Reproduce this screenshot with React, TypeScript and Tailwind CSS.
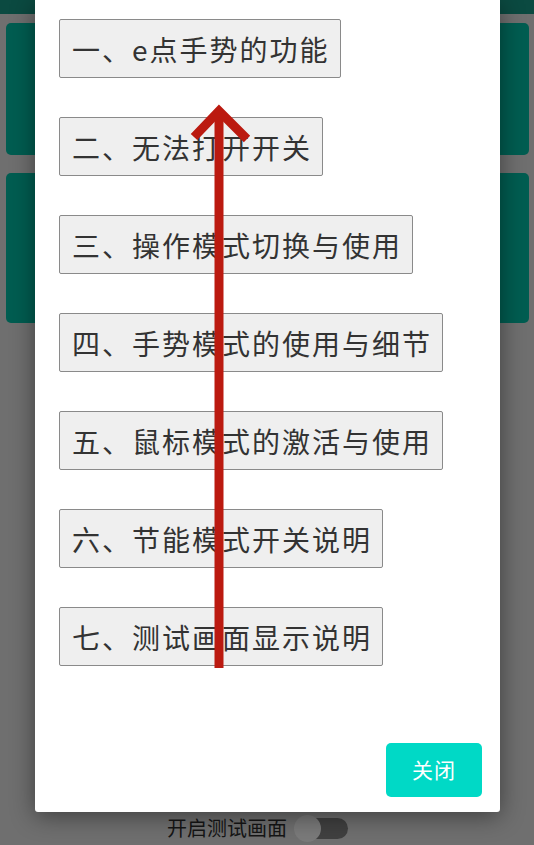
import React from "react";

const sections = [
  "一、e点手势的功能",
  "二、无法打开开关",
  "三、操作模式切换与使用",
  "四、手势模式的使用与细节",
  "五、鼠标模式的激活与使用",
  "六、节能模式开关说明",
  "七、测试画面显示说明",
];

export default function App() {
  return (
    <div
      className="relative h-[845px] w-[534px] overflow-hidden bg-[#6f6f6f]"
      style={{ fontFamily: '"Noto Sans CJK SC", "Noto Sans", sans-serif' }}
    >
      {/* page behind the dialog (dimmed) */}
      <div className="h-[14px] bg-[#0b4a41]" />
      <div className="flex flex-col gap-[18px] pl-[6px] pr-[5px] pt-[9px]">
        <div className="h-[132px] rounded-[5px] bg-[#005d51]" />
        <div className="h-[150px] rounded-[5px] bg-[#005d51]" />
      </div>
      <div className="absolute left-[167px] top-[813px] flex items-center gap-[6px]">
        <span className="text-[20px] leading-[30px] text-[#151515]">开启测试画面</span>
        <div className="relative h-[28px] w-[56px]">
          <div className="absolute left-[12px] top-[4px] h-[21px] w-[43px] rounded-full bg-[#404040]" />
          <div className="absolute left-[1px] top-[1px] h-[27px] w-[27px] rounded-full bg-[#7a7a7a]" />
        </div>
      </div>

      {/* dialog */}
      <div className="absolute left-[35px] top-0 flex h-[812px] w-[465px] flex-col rounded-b-[3px] bg-white shadow-[0_4px_24px_rgba(0,0,0,0.45)]">
        <div className="flex flex-col items-start gap-[39px] pl-[24px] pt-[19px]">
          {sections.map((s) => (
            <button
              key={s}
              className="flex h-[59px] items-center rounded-[2px] border border-[#8a8a8a] bg-[#efefef] pl-[12px] pr-[10px] text-[28px] tracking-[2px] text-[#333333]"
            >
              {s}
            </button>
          ))}
        </div>
        <div className="mt-auto flex justify-end pb-[15px] pr-[18px]">
          <button className="h-[54px] w-[96px] rounded-[5px] bg-[#00d9c6] text-[21px] tracking-[1px] text-white">
            关闭
          </button>
        </div>
      </div>

      {/* red arrow annotation */}
      <svg className="absolute left-0 top-0" width="534" height="845" viewBox="0 0 534 845">
        <g stroke="#bb1a10" strokeWidth="9" fill="none">
          <line x1="219" y1="668" x2="219" y2="114" />
          <polyline points="194,137 219,111 247,139" strokeLinejoin="miter" />
        </g>
      </svg>
    </div>
  );
}
